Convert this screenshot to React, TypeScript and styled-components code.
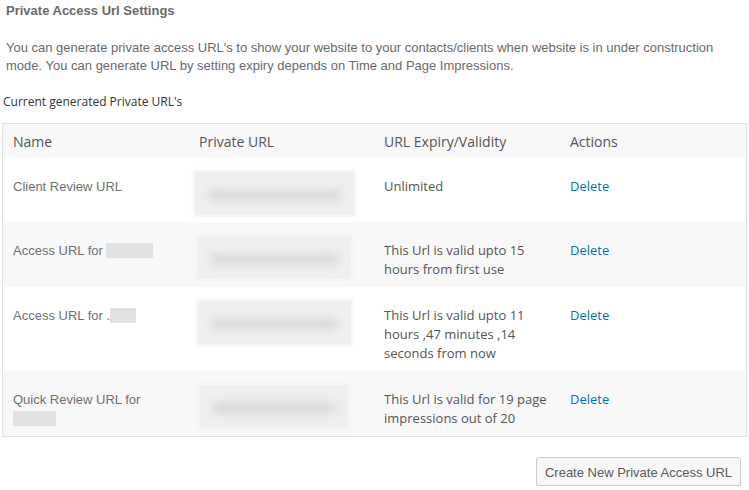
import React, { FC } from 'react'
import styled, { createGlobalStyle } from 'styled-components'

const GlobalStyle = createGlobalStyle`
  body {
    margin: 0;
    background: #fff;
    font-family: "Liberation Sans", Arial, sans-serif;
  }
`

const Page = styled.div`
  width: 749px;
  padding-top: 3px;
`

const Title = styled.h3`
  margin: 0 0 0 6px;
  font-size: 13px;
  line-height: 16px;
  font-weight: bold;
  color: #6a6a6a;
`

const Intro = styled.p`
  margin: 20px 0 0 6px;
  font-size: 13px;
  line-height: 18px;
  color: #6a6a6a;
  width: 730px;
`

const Subtitle = styled.div`
  margin: 19px 0 0 3px;
  font-family: "Open Sans", sans-serif;
  font-size: 12px;
  line-height: 16px;
  color: #333;
`

const Table = styled.div`
  margin: 13px 0 0 2px;
  width: 745px;
  box-sizing: border-box;
  border: 1px solid #e1e1e1;
`

const Row = styled.div<{ $shade?: boolean }>`
  display: grid;
  grid-template-columns: 186px 185px 186px 186px;
  background: ${p => (p.$shade ? '#f8f8f8' : '#fff')};
`

const HeadCell = styled.div`
  padding: 8px 10px 0;
  height: 34px;
  box-sizing: border-box;
  font-family: "Open Sans", sans-serif;
  font-size: 14px;
  line-height: 20px;
  color: #555;
`

const NameCell = styled.div`
  padding: 19px 10px 8px;
  font-size: 13px;
  line-height: 19px;
  color: #707070;
`

const TextCell = styled.div`
  padding: 19px 10px 8px;
  font-family: "Open Sans", sans-serif;
  font-size: 13px;
  line-height: 19px;
  color: #555;
`

const UrlCell = styled.div`
  padding: 14px 0 7px;
`

const Blur = styled.div<{ $left: number; $width: number }>`
  margin-left: ${p => p.$left}px;
  width: ${p => p.$width}px;
  height: 43px;
  background: #efefef;
  display: flex;
  align-items: center;
  justify-content: center;
  box-shadow: 0 0 4px 2px #f4f4f4;
`

const BlurBar = styled.span`
  display: block;
  width: 82%;
  height: 10px;
  margin-top: 3px;
  background: #d8d8d8;
  filter: blur(4px);
`

const Redacted = styled.span<{ $width: number }>`
  display: inline-block;
  vertical-align: -3px;
  width: ${p => p.$width}px;
  height: 15px;
  background: #e2e2e2;
  filter: blur(0.6px);
`

const DeleteLink = styled.a`
  font-family: "Open Sans", sans-serif;
  font-size: 13px;
  color: #0073aa;
  text-decoration: none;
  cursor: pointer;
`

const Footer = styled.div`
  display: flex;
  justify-content: flex-end;
  padding: 20px 8px 0 0;
`

const Button = styled.button`
  height: 29px;
  width: 205px;
  padding: 1px 0 0;
  border: 1px solid #ccc;
  border-radius: 3px;
  background: #f7f7f7;
  box-shadow: 0 1px 0 #ddd;
  font-family: "Liberation Sans", Arial, sans-serif;
  font-size: 13px;
  color: #5a5a5a;
  cursor: pointer;
`

interface UrlRow {
  id: string
  name: React.ReactNode
  expiry: React.ReactNode
  blurLeft: number
  blurWidth: number
}

const rows: UrlRow[] = [
  { id: 'r1', name: 'Client Review URL', expiry: 'Unlimited', blurLeft: 6, blurWidth: 159 },
  {
    id: 'r2',
    name: <>Access URL for <Redacted $width={47} /></>,
    expiry: <>This Url is valid upto 15<br />hours from first use</>,
    blurLeft: 8,
    blurWidth: 154,
  },
  {
    id: 'r3',
    name: <>Access URL for .<Redacted $width={26} /></>,
    expiry: <>This Url is valid upto 11<br />hours ,47 minutes ,14<br />seconds from now</>,
    blurLeft: 9,
    blurWidth: 153,
  },
  {
    id: 'r4',
    name: <>Quick Review URL for<br /><Redacted $width={43} /></>,
    expiry: <>This Url is valid for 19 page<br />impressions out of 20</>,
    blurLeft: 11,
    blurWidth: 148,
  },
]

const App: FC = () => {
  return (
    <Page>
      <GlobalStyle />
      <Title>Private Access Url Settings</Title>
      <Intro>
        You can generate private access URL's to show your website to your contacts/clients when website is in under construction
        mode. You can generate URL by setting expiry depends on Time and Page Impressions.
      </Intro>
      <Subtitle>Current generated Private URL's</Subtitle>
      <Table>
        <Row $shade>
          <HeadCell>Name</HeadCell>
          <HeadCell>Private URL</HeadCell>
          <HeadCell>URL Expiry/Validity</HeadCell>
          <HeadCell>Actions</HeadCell>
        </Row>
        {rows.map((r, i) => (
          <Row key={r.id} $shade={i % 2 === 1}>
            <NameCell>{r.name}</NameCell>
            <UrlCell>
              <Blur $left={r.blurLeft} $width={r.blurWidth}>
                <BlurBar />
              </Blur>
            </UrlCell>
            <TextCell>{r.expiry}</TextCell>
            <TextCell>
              <DeleteLink>Delete</DeleteLink>
            </TextCell>
          </Row>
        ))}
      </Table>
      <Footer>
        <Button>Create New Private Access URL</Button>
      </Footer>
    </Page>
  )
}

export default App
